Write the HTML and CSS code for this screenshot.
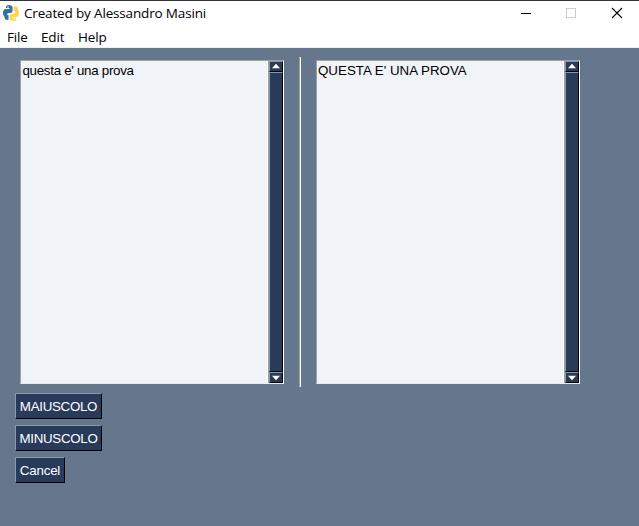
FILE: index.html
```html
<!DOCTYPE html>
<html lang="it">
<head>
<meta charset="utf-8">
<title>Created by Alessandro Masini</title>
<link rel="stylesheet" href="styles.css">
</head>
<body>
<div class="window">
  <header class="titlebar">
    <svg class="logo" width="16" height="18" viewBox="0 0 16 18">
      <path fill="#35719f" d="M3 4V3Q3 1 6 1T9.500 3V7Q9.500 9 7.500 9H6Q4 9 4 11V13H3Q0 13 0 9T3 5H6.500V4Z"/>
      <path fill="#fbd84b" d="M12 5h1Q16 5 16 9T13 13H9.500V14H13v1Q13 17 10 17T6.500 15V12Q6.500 10 8.500 10h1.500Q12 10 12 8Z"/>
      <path fill="#fbd84b" d="M10.500 2.500Q15 1.500 15 5V7H10.500Z"/>
      <path fill="#35719f" d="M1.500 11H5.500V16Q1.500 16.500 1.500 13Z"/>
      <circle cx="5" cy="3" r=".7" fill="#fff"/>
      <circle cx="11" cy="15" r=".7" fill="#fff"/>
    </svg>
    <span class="title">Created by Alessandro Masini</span>
    <svg class="controls" width="106" height="12" viewBox="0 0 106 12" fill="none" shape-rendering="crispEdges">
      <path d="M0 6.500h10" stroke="#000"/>
      <rect x="45.500" y="1.500" width="9" height="9" stroke="#ccc"/>
      <path d="M91 1l10 10M101 1L91 11" stroke="#000" stroke-width="1.100" shape-rendering="auto"/>
    </svg>
  </header>
  <nav class="menubar">
    <span class="menu file">File</span>
    <span class="menu edit">Edit</span>
    <span class="menu help">Help</span>
  </nav>
  <main class="content">
    <div class="panes">
      <section class="pane">
        <div class="text lower">questa e' una prova</div>
        <div class="scrollbar">
          <svg class="arrow" width="12" height="10" viewBox="0 0 12 10"><path d="M6 2L10.500 7H1.500Z" fill="#fff"/></svg>
          <div class="thumb"></div>
          <svg class="arrow" width="12" height="10" viewBox="0 0 12 10"><path d="M1.500 3H10.500L6 8Z" fill="#fff"/></svg>
        </div>
      </section>
      <div class="separator"></div>
      <section class="pane">
        <div class="text upper">QUESTA E' UNA PROVA</div>
        <div class="scrollbar">
          <svg class="arrow" width="12" height="10" viewBox="0 0 12 10"><path d="M6 2L10.500 7H1.500Z" fill="#fff"/></svg>
          <div class="thumb"></div>
          <svg class="arrow" width="12" height="10" viewBox="0 0 12 10"><path d="M1.500 3H10.500L6 8Z" fill="#fff"/></svg>
        </div>
      </section>
    </div>
    <div class="actions">
      <button class="btn wide">MAIUSCOLO</button>
      <button class="btn wide">MINUSCOLO</button>
      <button class="btn cancel">Cancel</button>
    </div>
  </main>
</div>
</body>
</html>
```
FILE: styles.css
```css
* { box-sizing: border-box; }
body { margin: 0; }
.window {
  width: 639px;
  height: 526px;
  display: flex;
  flex-direction: column;
  background: #64778d;
  overflow: hidden;
}
.titlebar {
  height: 25px;
  display: flex;
  align-items: center;
  padding: 0 12px 0 3px;
  background: #fff;
  border-top: 1px solid #35323c;
  font: 13.5px/18px "Open Sans", sans-serif;
  color: #000;
}
.title { margin-left: 5px; white-space: nowrap; letter-spacing: -0.16px; }
.controls { margin-left: auto; }
.menubar {
  height: 23px;
  display: flex;
  padding: 1px 0 0 7px;
  background: #fff;
  border-bottom: 1px solid #f0f0f0;
  font: 13.5px/22px "Open Sans", sans-serif;
  letter-spacing: -0.15px;
  color: #000;
}
.file { width: 34px; }
.edit { width: 37px; }
.content { padding: 9px 0 0 15px; }
.panes { display: flex; height: 330px; }
.pane {
  width: 264px;
  height: 324px;
  margin: 3px 0 0 5px;
  display: flex;
  background: #f0f3f8;
  border: 1px solid #a0a0a0;
  border-right-color: #fff;
  border-bottom-color: #e8ebef;
}
.separator {
  width: 2px;
  margin: 0 10px 0 15px;
  border-left: 1px solid #a0a0a0;
  border-right: 1px solid #fff;
}
.text {
  flex: 1;
  padding-left: 1px;
  font: 13.33px/19px "Liberation Sans", Arial, sans-serif;
  color: #000;
  white-space: nowrap;
}
.lower { letter-spacing: -0.29px; padding-left: 1.5px; }
.scrollbar {
  width: 15px;
  display: flex;
  flex-direction: column;
  border-left: 1px solid #a0a0a0;
  background: #283b5b;
  box-shadow: -1px 0 #fff;
}
.arrow, .thumb {
  display: block;
  width: 14px;
  border: 1px solid #8b97a9;
  border-right-color: #000;
  border-bottom-color: #000;
  background: #283b5b;
}
.arrow { height: 11px; }
.thumb { flex: 1; }
.actions {
  display: flex;
  flex-direction: column;
  align-items: flex-start;
  gap: 6px;
  padding-top: 6px;
}
.btn {
  height: 26px;
  padding: 1px 0 0;
  border: 1px solid #8b97a9;
  border-right-color: #000;
  border-bottom-color: #000;
  border-radius: 0;
  background: #283b5b;
  color: #fff;
  font: 13.33px/24px "Liberation Sans", Arial, sans-serif;
  letter-spacing: -0.3px;
}
.wide { width: 87px; }
.cancel { width: 50px; letter-spacing: -0.2px; }
```
